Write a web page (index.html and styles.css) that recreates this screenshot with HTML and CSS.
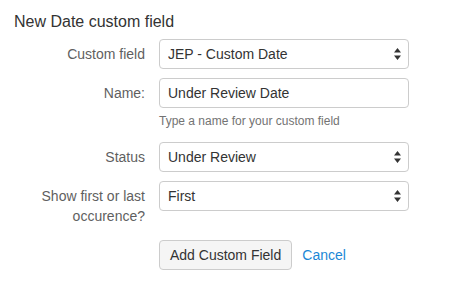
FILE: index.html
```html
<!DOCTYPE html>
<html lang="en">

<head>
  <meta charset="UTF-8">
  <title>New Date custom field</title>
  <link rel="stylesheet" href="styles.css">
</head>

<body>
  <h2 class="title">New Date custom field</h2>

  <form class="field-form">
    <div class="form-row">
      <label class="form-label" for="custom-field">Custom field</label>
      <div class="select-wrap">
        <select id="custom-field" class="form-control">
          <option>JEP - Custom Date</option>
        </select>
        <svg class="select-arrows" width="7" height="12" viewBox="0 0 7 12"><path d="M3.5 0 L7 4.5 H0 Z M3.5 12 L7 7.5 H0 Z" fill="#333"/></svg>
      </div>
    </div>

    <div class="form-row">
      <label class="form-label" for="field-name">Name:</label>
      <div>
        <input id="field-name" class="form-control" type="text" value="Under Review Date">
        <p class="help-text">Type a name for your custom field</p>
      </div>
    </div>

    <div class="form-row">
      <label class="form-label" for="status">Status</label>
      <div class="select-wrap">
        <select id="status" class="form-control">
          <option>Under Review</option>
        </select>
        <svg class="select-arrows" width="7" height="12" viewBox="0 0 7 12"><path d="M3.5 0 L7 4.5 H0 Z M3.5 12 L7 7.5 H0 Z" fill="#333"/></svg>
      </div>
    </div>

    <div class="form-row">
      <label class="form-label" for="occurence">Show first or last occurence?</label>
      <div class="select-wrap">
        <select id="occurence" class="form-control">
          <option>First</option>
        </select>
        <svg class="select-arrows" width="7" height="12" viewBox="0 0 7 12"><path d="M3.5 0 L7 4.5 H0 Z M3.5 12 L7 7.5 H0 Z" fill="#333"/></svg>
      </div>
    </div>

    <div class="form-actions">
      <button type="button" class="btn">Add Custom Field</button>
      <a href="#" class="cancel-link">Cancel</a>
    </div>
  </form>
</body>

</html>
```

FILE: styles.css
```css
body {
  font-family: 'Liberation Sans', Arial, sans-serif;
  margin: 0;
  background-color: #fff;
  color: #333;
}

.title {
  margin: 0;
  padding: 12px 0 0 14px;
  font-size: 16px;
  line-height: 20px;
  font-weight: normal;
  color: #333;
}

.field-form {
  margin-top: 7px;
}

.form-row {
  display: grid;
  grid-template-columns: 145px 250px;
  column-gap: 14px;
  margin-bottom: 9px;
}

.form-label {
  text-align: right;
  font-size: 14px;
  line-height: 20px;
  padding-top: 5px;
  color: #5f5f5f;
}

.select-wrap {
  position: relative;
}

.form-control {
  display: block;
  box-sizing: border-box;
  width: 100%;
  height: 30px;
  margin: 0;
  padding: 0 8px;
  font-family: inherit;
  font-size: 14px;
  color: #333;
  background-color: #fff;
  border: 1px solid #ccc;
  border-radius: 4px;
  outline: none;
  -webkit-appearance: none;
  appearance: none;
}

.select-arrows {
  position: absolute;
  right: 8px;
  top: 9px;
  pointer-events: none;
}

.help-text {
  margin: 5px 0 3px;
  font-size: 12px;
  line-height: 17px;
  color: #737373;
}

.form-actions {
  display: flex;
  align-items: center;
  gap: 10px;
  margin: 14px 0 0 159px;
}

.btn {
  box-sizing: border-box;
  height: 30px;
  padding: 0 10px;
  font-family: inherit;
  font-size: 14px;
  color: #333;
  background-color: #f5f5f5;
  border: 1px solid #ccc;
  border-radius: 4px;
  cursor: pointer;
}

.cancel-link {
  font-size: 14px;
  color: #1a87d6;
  text-decoration: none;
}
```
